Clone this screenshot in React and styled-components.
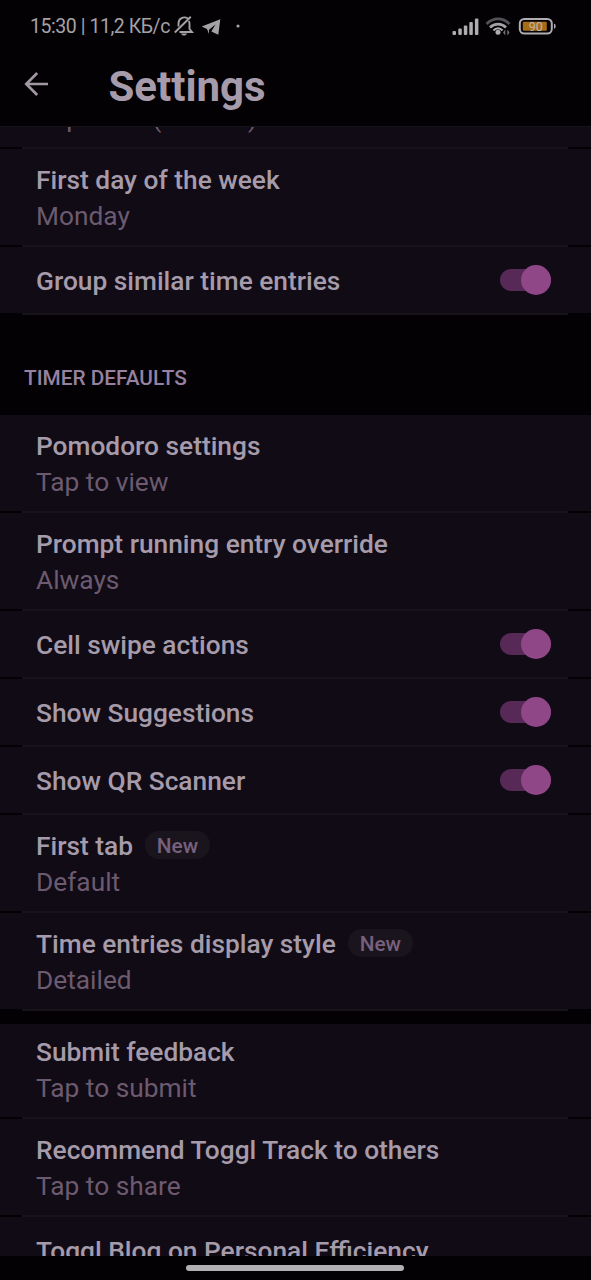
import React from 'react';
import styled, { createGlobalStyle } from 'styled-components';

const Global = createGlobalStyle`
  * { box-sizing: border-box; }
  body { margin: 0; background: #030104; }
`;

const Screen = styled.div`
  width: 591px;
  height: 1280px;
  display: flex;
  flex-direction: column;
  overflow: hidden;
  background: #030104;
  font-family: Roboto, "Liberation Sans", sans-serif;
  color: #a69baa;
  white-space: nowrap;
`;

const StatusBar = styled.div`
  height: 52px;
  flex: none;
  display: flex;
  align-items: center;
  padding: 0 34px 0 30px;
  font-size: 19.5px;
  color: #a5a2a6;
`;

const StatusText = styled.span`
  width: 143px;
  letter-spacing: -0.45px;
`;

const StatusGroup = styled.div`
  display: flex;
  margin-left: ${({ $end }) => ($end ? 'auto' : '0')};
`;

const Header = styled.header`
  height: 75px;
  flex: none;
  display: flex;
  align-items: center;
  padding: 0 24px 10px;
  border-bottom: 1px solid #161317;
`;

const BackIcon = styled.svg`
  display: block;
  flex: none;
  margin-right: 60px;
`;

const Title = styled.h1`
  margin: 5px 0 0 -0.5px;
  font-size: 42px;
  line-height: 50px;
  font-weight: 700;
`;

const List = styled.main`
  height: 1129px;
  flex: none;
  display: flex;
  flex-direction: column;
  overflow: hidden;
`;

const rowHeights = { double: 98, first: 95, single: 68 };

const Row = styled.div`
  flex: none;
  height: ${({ $kind }) => rowHeights[$kind]}px;
  margin-top: ${({ $offset }) => $offset || 0}px;
  display: flex;
  flex-direction: column;
  background: #110b15;
`;

const RowBody = styled.div`
  flex: 1;
  display: flex;
  align-items: center;
  justify-content: space-between;
  padding: ${({ $kind }) => ($kind === 'first' ? '0 40px 1px 36px' : '2px 40px 0 36px')};
`;

const Separator = styled.div`
  height: 2px;
  flex: none;
  background: #030104;
  padding: 0 23px 0 22px;
  &::before {
    content: '';
    display: block;
    height: 2px;
    background: #17121b;
  }
`;

const Label = styled.div`
  display: flex;
  align-items: center;
  font-size: 26.3px;
  line-height: 36px;
  font-weight: 500;
`;

const Value = styled.div`
  font-size: 26.3px;
  line-height: 36px;
  color: #6c5a70;
`;

const Badge = styled.span`
  width: 65px;
  height: 28px;
  margin: -2px 0 0 12px;
  border-radius: 14px;
  background: #1a151c;
  color: #78607e;
  font-size: 20.8px;
  line-height: 30px;
  text-align: center;
`;

const Track = styled.div`
  width: 51px;
  height: 22px;
  margin-top: -3px;
  display: flex;
  align-items: center;
  justify-content: flex-end;
  border-radius: 11px;
  background: #562957;
`;

const Thumb = styled.div`
  width: 30px;
  height: 30px;
  flex: none;
  border-radius: 50%;
  background: #904788;
`;

const SectionTitle = styled.h2`
  flex: none;
  height: 100px;
  margin: 0;
  padding: 26px 24px 0;
  line-height: 74px;
  font-size: 20.8px;
  font-weight: 500;
  color: #9681a0;
`;

const Gap = styled.div`
  height: 13px;
  flex: none;
`;

const NavBar = styled.footer`
  flex: 1;
  display: flex;
  justify-content: center;
  padding: 9px 2px 0 0;
`;

const Handle = styled.div`
  width: 218px;
  height: 6px;
  border-radius: 3px;
  background: #b3b0b4;
`;

function Setting({ label, value, badge, toggle, offset, first }) {
  const kind = first ? 'first' : value ? 'double' : 'single';
  return (
    <Row $kind={kind} $offset={offset}>
      <RowBody $kind={kind}>
        <div>
          <Label>
            {label}
            {badge && <Badge>{badge}</Badge>}
          </Label>
          {value && <Value>{value}</Value>}
        </div>
        {toggle && (
          <Track>
            <Thumb />
          </Track>
        )}
      </RowBody>
      <Separator />
    </Row>
  );
}

function NoticeIcons() {
  return (
    <svg width="70" height="24" viewBox="0 0 70 24">
      <g fill="none" stroke="#a5a2a6" strokeWidth="1.9">
        <path d="M15 4.500C10.500 1.800 5.500 4.500 5.500 9.500V12.500M6.500 18H19L16.500 15V10C16.500 8.700 16.300 7.800 15.800 7" />
        <path d="M1.800 18.500L17.800 2.800" />
      </g>
      <path d="M8 19.500H14C13 22.300 9 22.300 8 19.500Z" fill="#a5a2a6" />
      <path d="M28.700 12.500L47.300 5.200L45.300 20.800L38.300 17.500L42.500 10.500L36 15.800V20L34 14.900Z" fill="#a5a2a6" />
      <circle cx="65" cy="12" r="1.600" fill="#a5a2a6" />
    </svg>
  );
}

function SystemIcons() {
  return (
    <svg width="105" height="24" viewBox="0 0 105 24">
      <g fill="#b0adb1">
        <rect x="0.500" y="17" width="3.500" height="4" rx="1" />
        <rect x="6.300" y="14.500" width="3.500" height="6.500" rx="1" />
        <rect x="11.800" y="11.500" width="3.500" height="9.500" rx="1" />
        <rect x="17.300" y="8" width="3.500" height="13" rx="1" />
        <rect x="22.900" y="4.500" width="3.500" height="16.500" rx="1" />
        <circle cx="46" cy="18.300" r="2.500" />
        <path d="M51 18.500L53.300 15.500V21.500ZM57.500 18.500L55.300 15.500V21.500Z" opacity=".65" />
      </g>
      <g fill="none" strokeWidth="2.600">
        <path d="M34.500 10C41 3.200 51 3.200 57.500 10" stroke="#555257" />
        <path d="M38 13.500C42.500 9 49.500 9 54 13.500" stroke="#a5a2a6" />
        <path d="M41.500 16.500C44 13.600 48 13.600 50.500 16.500" stroke="#b0adb1" strokeWidth="2" />
        <rect x="67.800" y="4.900" width="32" height="14.600" rx="4.500" stroke="#b0adb1" strokeWidth="2" />
      </g>
      <rect x="70.800" y="7.700" width="24" height="9" rx="1" fill="#a66d16" />
      <path d="M102 9.800C104.200 10 104.200 14.500 102 14.700Z" fill="#b0adb1" />
      <text x="83.800" y="16.600" textAnchor="middle" fontSize="12.500" fill="#c4b7a6">90</text>
    </svg>
  );
}

export default function App() {
  return (
    <Screen>
      <Global />
      <StatusBar>
        <StatusText>15:30 | 11,2 КБ/с</StatusText>
        <StatusGroup>
          <NoticeIcons />
        </StatusGroup>
        <StatusGroup $end>
          <SystemIcons />
        </StatusGroup>
      </StatusBar>
      <Header>
        <BackIcon width="25" height="26" viewBox="0 0 25 26" fill="none" stroke="#a198a4" strokeWidth="2.600">
          <path d="M24 13H2.500M13.200 2L2.200 13L13.200 24" />
        </BackIcon>
        <Title>Settings</Title>
      </Header>
      <List>
        <Setting label="Duration format" value="Improved (0:47:06)" offset={-76} />
        <Setting label="First day of the week" value="Monday" />
        <Setting label="Group similar time entries" toggle />
        <SectionTitle>TIMER DEFAULTS</SectionTitle>
        <Setting label="Pomodoro settings" value="Tap to view" />
        <Setting label="Prompt running entry override" value="Always" />
        <Setting label="Cell swipe actions" toggle />
        <Setting label="Show Suggestions" toggle />
        <Setting label="Show QR Scanner" toggle />
        <Setting label="First tab" value="Default" badge="New" />
        <Setting label="Time entries display style" value="Detailed" badge="New" />
        <Gap />
        <Setting label="Submit feedback" value="Tap to submit" first />
        <Setting label="Recommend Toggl Track to others" value="Tap to share" />
        <Setting label="Toggl Blog on Personal Efficiency" />
      </List>
      <NavBar>
        <Handle />
      </NavBar>
    </Screen>
  );
}
